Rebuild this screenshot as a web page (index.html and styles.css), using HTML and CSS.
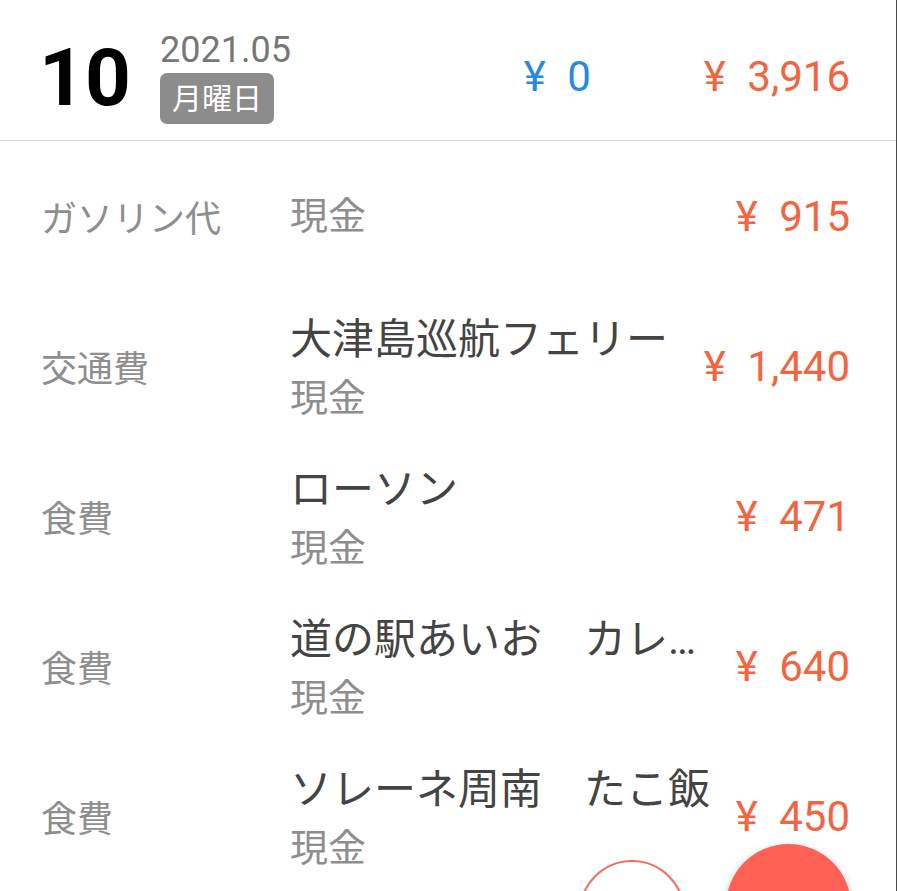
FILE: index.html
```html
<!DOCTYPE html>
<html lang="ja">
<head>
    <meta charset="UTF-8">
    <meta name="viewport" content="width=device-width, initial-scale=1.0">
    <title>家計簿</title>
    <link rel="stylesheet" href="styles.css">
</head>
<body>
    <main class="page">
        <header class="day-head">
            <div class="day-num">10</div>
            <div class="day-meta">
                <div class="day-month">2021.05</div>
                <div class="day-week">月曜日</div>
            </div>
            <div class="day-totals">
                <span class="income"><span class="yen">¥</span> 0</span>
                <span class="expense"><span class="yen">¥</span> 3,916</span>
            </div>
        </header>
        <ul class="entries">
            <li class="entry">
                <div class="entry-cat">ガソリン代</div>
                <div class="entry-body">
                    <div class="entry-note">現金</div>
                </div>
                <div class="entry-amount"><span class="yen">¥</span> 915</div>
            </li>
            <li class="entry">
                <div class="entry-cat">交通費</div>
                <div class="entry-body">
                    <div class="entry-title">大津島巡航フェリー</div>
                    <div class="entry-note">現金</div>
                </div>
                <div class="entry-amount"><span class="yen">¥</span> 1,440</div>
            </li>
            <li class="entry">
                <div class="entry-cat">食費</div>
                <div class="entry-body">
                    <div class="entry-title">ローソン</div>
                    <div class="entry-note">現金</div>
                </div>
                <div class="entry-amount"><span class="yen">¥</span> 471</div>
            </li>
            <li class="entry">
                <div class="entry-cat">食費</div>
                <div class="entry-body">
                    <div class="entry-title">道の駅あいお　カレーライス</div>
                    <div class="entry-note">現金</div>
                </div>
                <div class="entry-amount"><span class="yen">¥</span> 640</div>
            </li>
            <li class="entry">
                <div class="entry-cat">食費</div>
                <div class="entry-body">
                    <div class="entry-title">ソレーネ周南　たこ飯</div>
                    <div class="entry-note">現金</div>
                </div>
                <div class="entry-amount"><span class="yen">¥</span> 450</div>
            </li>
        </ul>
        <div class="fabs">
            <button class="fab-sub"></button>
            <button class="fab-main"></button>
        </div>
    </main>
</body>
</html>
```

FILE: styles.css
```css
body {
    margin: 0;
    font-family: Roboto, "Noto Sans CJK JP", sans-serif;
    background-color: #fff;
    overflow: hidden;
}
.page {
    position: relative;
    box-sizing: border-box;
    width: 897px;
    height: 891px;
    border-right: 1px solid #4a4a4a;
    overflow: hidden;
}
.day-head {
    display: flex;
    align-items: flex-start;
    box-sizing: border-box;
    height: 141px;
    padding: 32px 46px 0 39px;
    border-bottom: 1px solid #dcdcdc;
}
.day-num {
    width: 121px;
    margin-top: 6px;
    font-size: 80px;
    font-weight: 700;
    line-height: 80px;
    color: #000;
}
.day-meta {
    display: flex;
    flex-direction: column;
    align-items: flex-start;
}
.day-month {
    font-size: 36px;
    line-height: 36px;
    color: #777;
}
.day-week {
    margin-top: 5px;
    padding: 0 12px;
    font-size: 30px;
    line-height: 51px;
    color: #fff;
    background-color: #8c8c8c;
    border-radius: 7px;
}
.day-totals {
    display: flex;
    gap: 113px;
    margin-left: auto;
    margin-top: 20px;
    font-size: 42px;
    line-height: 49px;
}
.income {
    color: #2b87e6;
}
.expense {
    color: #f26541;
}
.yen {
    margin-right: 11px;
}
.entries {
    list-style: none;
    margin: 0;
    padding: 0;
}
.entry {
    display: flex;
    align-items: center;
    height: 150px;
    padding: 0 46px 0 41px;
}
.entry-cat {
    flex: none;
    width: 249px;
    font-size: 36px;
    color: #8e8e8e;
}
.entry-body {
    flex: 1;
    min-width: 0;
    margin-right: 18px;
}
.entry-title {
    font-size: 42px;
    line-height: 64px;
    color: #444;
    white-space: nowrap;
    overflow: hidden;
    text-overflow: ellipsis;
}
.entry-note {
    font-size: 38px;
    line-height: 52px;
    color: #8e8e8e;
}
.entry-amount {
    flex: none;
    font-size: 42px;
    line-height: 49px;
    color: #f26541;
}
.fabs {
    position: absolute;
    top: 844px;
    right: 45px;
    display: flex;
    align-items: flex-start;
    gap: 41px;
}
.fab-sub,
.fab-main {
    padding: 0;
    border-radius: 50%;
    cursor: pointer;
}
.fab-sub {
    width: 106px;
    height: 106px;
    margin-top: 16px;
    border: 2px solid #f2705f;
    background-color: #fff;
}
.fab-main {
    width: 125px;
    height: 125px;
    border: none;
    background-color: #ff6154;
    box-shadow: 0 3px 8px rgba(0, 0, 0, 0.25);
}
```
